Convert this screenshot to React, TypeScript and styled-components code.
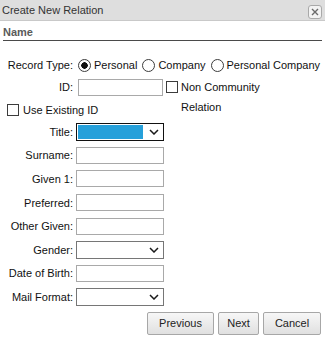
import React, { useState } from "react";
import styled, { createGlobalStyle } from "styled-components";

const GlobalStyle = createGlobalStyle`
  html, body {
    margin: 0;
    padding: 0;
    background: #ffffff;
  }
  body {
    font-family: "Liberation Sans", Arial, sans-serif;
    font-size: 11px;
    color: #111;
  }
  * {
    box-sizing: border-box;
  }
`;

const Chevron = () => (
  <svg width="10" height="6" viewBox="0 0 10 6" fill="none">
    <path d="M1 1 L5 5 L9 1" stroke="#1a1a1a" strokeWidth="1.5" />
  </svg>
);

const CloseIcon = () => (
  <svg width="8" height="8" viewBox="0 0 8 8" fill="none">
    <path d="M1 1 L7 7 M7 1 L1 7" stroke="#6a6a6a" strokeWidth="1.4" />
  </svg>
);

const fields = [
  { label: "Title:", kind: "select", focused: true },
  { label: "Surname:", kind: "text" },
  { label: "Given 1:", kind: "text" },
  { label: "Preferred:", kind: "text" },
  { label: "Other Given:", kind: "text" },
  { label: "Gender:", kind: "select" },
  { label: "Date of Birth:", kind: "text" },
  { label: "Mail Format:", kind: "select" },
];

const recordTypes = ["Personal", "Company", "Personal Company"];

const buttons = [
  { text: "Previous", width: 67 },
  { text: "Next", width: 41 },
  { text: "Cancel", width: 58 },
];

const App = () => {
  const [recordType, setRecordType] = useState("Personal");
  const [nonCommunity, setNonCommunity] = useState(false);
  const [useExisting, setUseExisting] = useState(false);

  return (
    <>
      <GlobalStyle />
      <Dialog>
        <TitleBar>
          <TitleText>Create New Relation</TitleText>
          <CloseButton type="button" aria-label="Close">
            <CloseIcon />
          </CloseButton>
        </TitleBar>
        <Body>
          <SectionHeader>Name</SectionHeader>

          <RecordRow>
            <FieldLabel>Record Type:</FieldLabel>
            {recordTypes.map((type) => (
              <RadioOption key={type}>
                <Radio
                  type="radio"
                  name="recordType"
                  checked={recordType === type}
                  onChange={() => setRecordType(type)}
                />
                {type}
              </RadioOption>
            ))}
          </RecordRow>

          <IdBlock>
            <IdColumn>
              <IdRow>
                <FieldLabel>ID:</FieldLabel>
                <TextInput $width={85} $offset={2} />
              </IdRow>
              <CheckRow>
                <Check
                  type="checkbox"
                  checked={useExisting}
                  onChange={() => setUseExisting(!useExisting)}
                />
                Use Existing ID
              </CheckRow>
            </IdColumn>
            <NonCommunity>
              <Check
                type="checkbox"
                checked={nonCommunity}
                onChange={() => setNonCommunity(!nonCommunity)}
              />
              <NonCommunityText>
                Non Community
                <br />
                Relation
              </NonCommunityText>
            </NonCommunity>
          </IdBlock>

          <FieldGrid>
            {fields.map((field) => (
              <React.Fragment key={field.label}>
                <FieldLabel>{field.label}</FieldLabel>
                {field.kind === "select" ? (
                  <SelectBox $focused={!!field.focused}>
                    {field.focused && <Highlight />}
                    <ChevronWrap>
                      <Chevron />
                    </ChevronWrap>
                  </SelectBox>
                ) : (
                  <TextInput $width={88} />
                )}
              </React.Fragment>
            ))}
          </FieldGrid>

          <ButtonBar>
            {buttons.map((b) => (
              <Button key={b.text} type="button" $width={b.width}>
                {b.text}
              </Button>
            ))}
          </ButtonBar>
        </Body>
      </Dialog>
    </>
  );
};

export default App;

const Dialog = styled.div`
  width: 325px;
  height: 340px;
  background: #ffffff;
`;

const TitleBar = styled.div`
  display: flex;
  align-items: center;
  justify-content: space-between;
  height: 21px;
  padding: 0 3px 0 2px;
  background: #dedede;
  border-bottom: 1px solid #c9c9c9;
`;

const TitleText = styled.span`
  color: #333333;
  line-height: 20px;
`;

const CloseButton = styled.button`
  display: flex;
  align-items: center;
  justify-content: center;
  align-self: flex-end;
  width: 14px;
  height: 14px;
  margin: 0 0 1px 0;
  padding: 0;
  border: 1px solid #a9a9a9;
  border-radius: 3px;
  background: #f3f3f3;
`;

const Body = styled.div`
  padding: 0 3px;
`;

const SectionHeader = styled.div`
  padding-top: 4px;
  line-height: 15px;
  font-weight: bold;
  color: #5a5a5a;
  border-bottom: 1px solid #4a4a4a;
`;

const FieldLabel = styled.span`
  flex: 0 0 70px;
  width: 70px;
  text-align: right;
  color: #111;
  white-space: nowrap;
`;

const RecordRow = styled.div`
  display: flex;
  align-items: center;
  height: 20px;
  margin-top: 14px;
  white-space: nowrap;
`;

const RadioOption = styled.label`
  display: flex;
  align-items: center;
  color: #111;
`;

const Radio = styled.input`
  appearance: none;
  flex: 0 0 13px;
  width: 13px;
  height: 13px;
  margin: 0 3px 0 5px;
  border: 1px solid #3c3c3c;
  border-radius: 50%;
  background: #ffffff;

  &:checked {
    background: radial-gradient(circle, #111 0 3px, #ffffff 3.5px);
  }
`;

const Check = styled.input`
  appearance: none;
  flex: 0 0 12px;
  width: 12px;
  height: 12px;
  margin: 0;
  border: 1px solid #3c3c3c;
  background: #ffffff;
`;

const IdBlock = styled.div`
  display: flex;
  margin-top: 2px;
`;

const IdColumn = styled.div`
  display: flex;
  flex-direction: column;
  width: 160px;
`;

const IdRow = styled.div`
  display: flex;
  align-items: center;
  gap: 3px;
  height: 20px;
`;

const CheckRow = styled.label`
  display: flex;
  align-items: center;
  gap: 4px;
  height: 20px;
  margin-top: 3px;
  padding-left: 4px;
`;

const NonCommunity = styled.label`
  display: flex;
  align-items: flex-start;
  gap: 3px;
  margin-left: 3px;

  ${Check} {
    margin-top: 4px;
  }
`;

const NonCommunityText = styled.span`
  display: block;
  line-height: 20px;
`;

const TextInput = styled.input<{ $width: number; $offset?: number }>`
  width: ${(p) => p.$width}px;
  height: 17px;
  margin: 0 0 0 ${(p) => p.$offset || 0}px;
  padding: 0 2px;
  border: 1px solid #a9a9a9;
  border-radius: 0;
  background: #ffffff;
  font: inherit;
  outline: none;
`;

const FieldGrid = styled.div`
  display: grid;
  grid-template-columns: 70px auto;
  grid-auto-rows: 23.6px;
  column-gap: 3px;
  align-items: center;
  justify-items: start;
`;

const SelectBox = styled.div<{ $focused: boolean }>`
  display: flex;
  align-items: stretch;
  width: 88px;
  height: 18px;
  padding: 1px;
  border: 1px solid ${(p) => (p.$focused ? "#111111" : "#767676")};
  background: #ffffff;
`;

const Highlight = styled.span`
  flex: 0 0 65px;
  background: #26a0da;
`;

const ChevronWrap = styled.span`
  display: flex;
  align-items: center;
  margin-left: auto;
  margin-right: 3px;
`;

const ButtonBar = styled.div`
  display: flex;
  justify-content: flex-end;
  gap: 4px;
  margin-top: 3px;
  padding-right: 1px;
`;

const Button = styled.button<{ $width: number }>`
  width: ${(p) => p.$width}px;
  height: 23px;
  padding: 0;
  border: 1px solid #a7a7a7;
  border-radius: 2px;
  background: linear-gradient(#f7f7f7, #e0e0e0);
  color: #222222;
  font-family: "Liberation Sans", Arial, sans-serif;
  font-size: 11px;
`;
